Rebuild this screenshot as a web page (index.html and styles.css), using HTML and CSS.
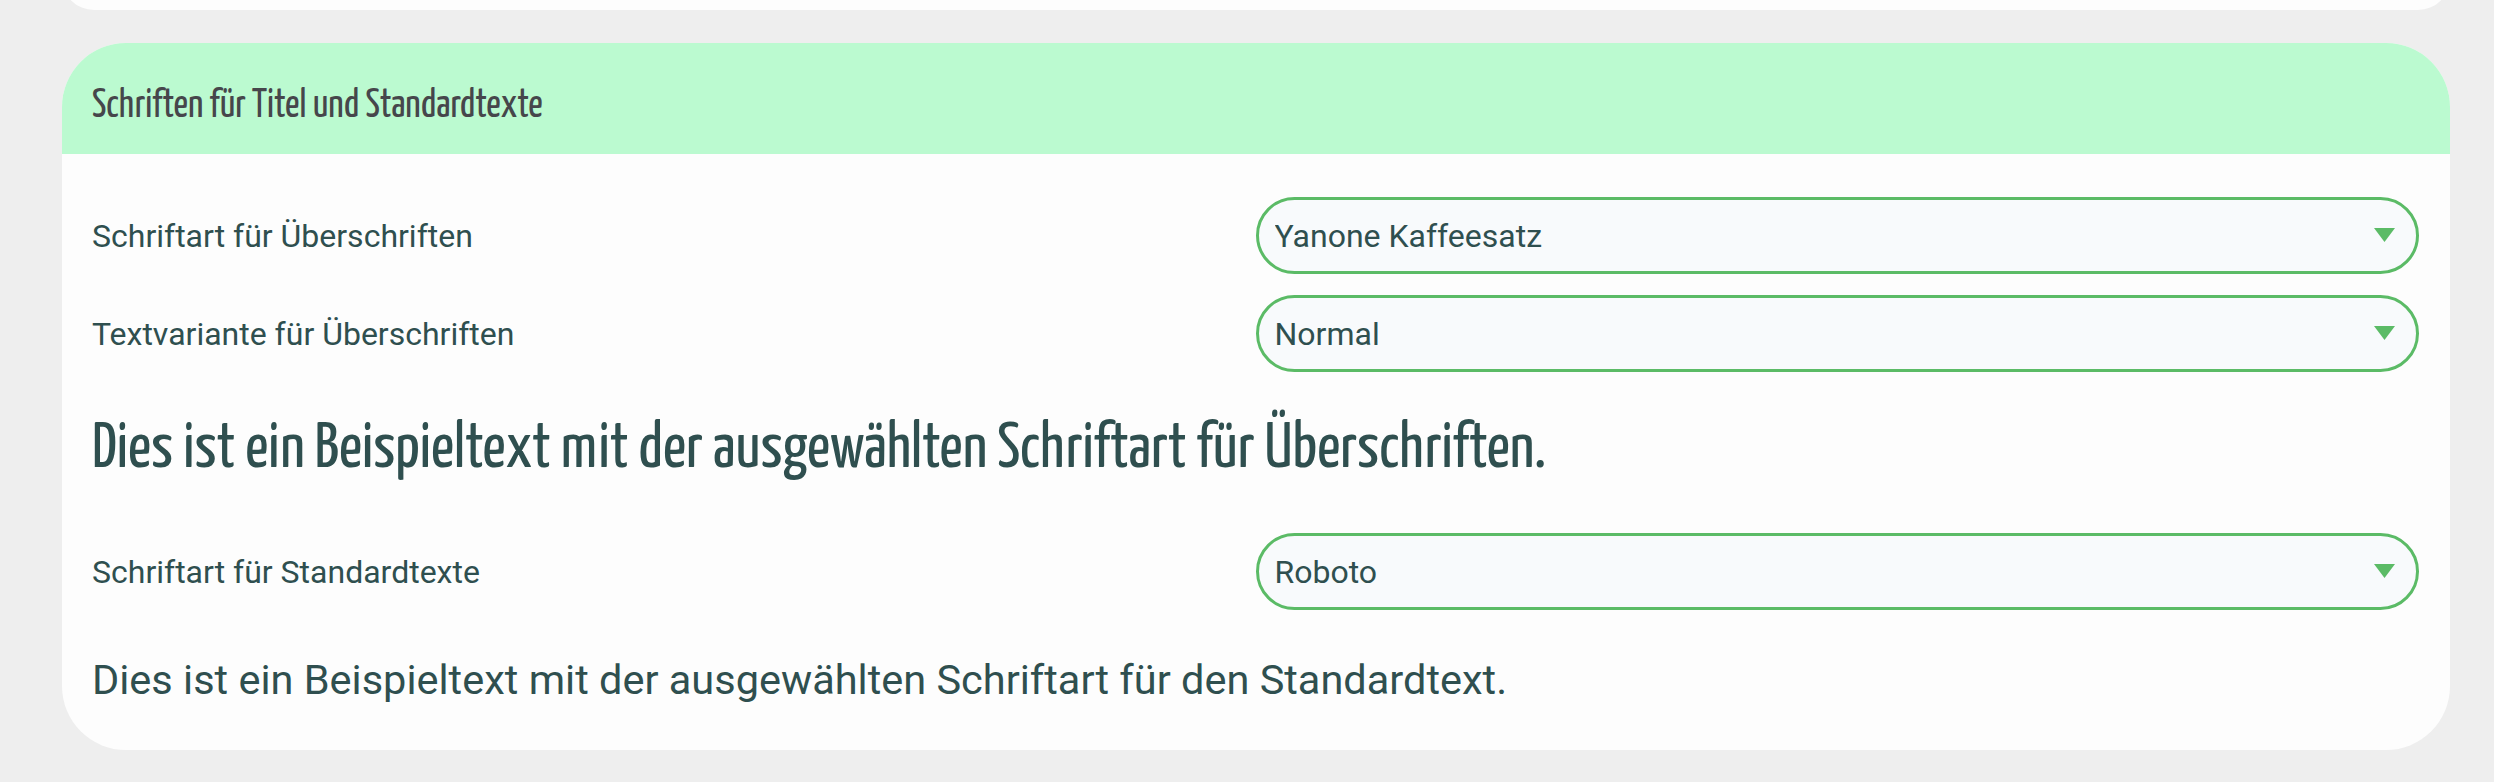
FILE: index.html
```html
<!DOCTYPE html>
<html lang="de">
<head>
    <meta charset="UTF-8">
    <title>Schriften</title>
    <link rel="stylesheet" href="styles.css">
</head>
<body>

    <div class="card card-prev"></div>

    <section class="card">
        <header class="card-header">
            <h3>Schriften für Titel und Standardtexte</h3>
        </header>

        <div class="card-body">
            <div class="field">
                <label for="heading-font">Schriftart für Überschriften</label>
                <div class="select-wrap">
                    <select id="heading-font">
                        <option>Yanone Kaffeesatz</option>
                        <option>Roboto</option>
                        <option>Open Sans</option>
                    </select>
                    <svg class="select-arrow" width="21" height="14" viewBox="0 0 21 14"><path d="M0 0H21L10.5 14Z"/></svg>
                </div>
            </div>

            <div class="field">
                <label for="heading-variant">Textvariante für Überschriften</label>
                <div class="select-wrap">
                    <select id="heading-variant">
                        <option>Normal</option>
                        <option>Fett</option>
                    </select>
                    <svg class="select-arrow" width="21" height="14" viewBox="0 0 21 14"><path d="M0 0H21L10.5 14Z"/></svg>
                </div>
            </div>

            <h2 class="sample-heading">Dies ist ein Beispieltext mit der ausgewählten Schriftart für Überschriften.</h2>

            <div class="field">
                <label for="text-font">Schriftart für Standardtexte</label>
                <div class="select-wrap">
                    <select id="text-font">
                        <option>Roboto</option>
                        <option>Open Sans</option>
                        <option>Lato</option>
                    </select>
                    <svg class="select-arrow" width="21" height="14" viewBox="0 0 21 14"><path d="M0 0H21L10.5 14Z"/></svg>
                </div>
            </div>

            <p class="sample-text">Dies ist ein Beispieltext mit der ausgewählten Schriftart für den Standardtext.</p>
        </div>
    </section>

</body>
</html>
```

FILE: styles.css
```css
body {
    margin: 0;
    padding: 0 44px 0 62px;
    background: #eeeeee;
    font-family: Roboto, "Noto Sans", sans-serif;
    color: #2f4f4f;
    overflow: hidden;
}

.card {
    background: #fdfdfd;
    border-radius: 64px;
    overflow: hidden;
}

.card-prev {
    height: 64px;
    margin-top: -54px;
    margin-bottom: 33px;
}

.card-header {
    background: #bbfad0;
    height: 111px;
    padding: 0 30px;
    display: flex;
    align-items: center;
}

.card-header h3,
.sample-heading {
    font-family: "Yanone Kaffeesatz", "DejaVu Sans Condensed", "Liberation Sans Narrow", "DejaVu Sans", sans-serif;
    font-stretch: condensed;
    font-weight: normal;
    margin: 0;
}

.card-header h3 {
    font-size: 40px;
    color: #46464b;
    padding-top: 15px;
}

.card-body {
    padding: 43px 31px 46px 30px;
}

.field {
    display: grid;
    grid-template-columns: 1fr 1fr;
    align-items: center;
    margin-bottom: 21px;
}

.field label {
    font-size: 32px;
}

.select-wrap {
    position: relative;
}

.select-wrap select {
    width: 100%;
    height: 77px;
    padding: 0 60px 0 16px;
    border: 3px solid #5bbb66;
    border-radius: 40px;
    background: #f8fafc;
    font-family: Roboto, sans-serif;
    font-size: 32px;
    color: #2f4f4f;
    appearance: none;
    -webkit-appearance: none;
    outline: none;
}

.select-arrow {
    position: absolute;
    right: 24px;
    top: 31px;
    fill: #5bbb66;
    pointer-events: none;
}

.sample-heading {
    font-size: 64px;
    line-height: 72px;
    padding-top: 21px;
    margin-bottom: 47px;
}

.sample-text {
    font-size: 41.5px;
    line-height: 48px;
    margin: 46px 0 0;
}
```
